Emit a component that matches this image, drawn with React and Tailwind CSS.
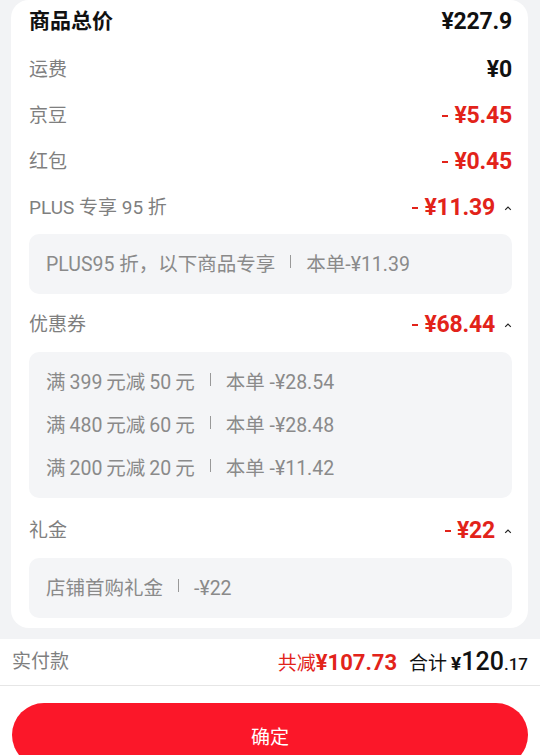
import React from "react";

const FONT = { fontFamily: '"Roboto", "Noto Sans CJK SC", sans-serif' };

// small up chevron next to collapsible amounts
const ChevronUp = () => (
  <svg width="8" height="6" viewBox="0 0 8 6" className="ml-[9px]">
    <path d="M1.2 4.8 L4 2 L6.8 4.8" fill="none" stroke="#222" strokeWidth="1.2" />
  </svg>
);

const Amount = ({ value, red }) => {
  if (!red) {
    return (
      <span className="text-[23px] font-bold tracking-[-0.2px] text-[#111]">
        {value}
      </span>
    );
  }
  return (
    <span className="flex items-center text-[23px] font-bold tracking-[-0.2px] text-[#e2231a]">
      <span className="mr-[6px] inline-block h-[2.5px] w-[6px] bg-[#e2231a]" />
      {value}
    </span>
  );
};

const Row = ({ label, amount, red, open }) => (
  <div className="flex h-[46px] items-center justify-between">
    <span className="whitespace-pre text-[19px] text-[#7f7f7f]">{label}</span>
    <div className="flex items-center">
      <Amount value={amount} red={red} />
      {open && <ChevronUp />}
    </div>
  </div>
);

const Sep = () => (
  <span className="mx-[15px] inline-block h-[13px] w-px translate-y-[-3px] bg-[#999]" />
);

const DetailBox = ({ lines, className = "" }) => (
  <div className={`rounded-[10px] bg-[#f4f5f7] px-[17px] pt-[9px] pb-[8px] ${className}`}>
    {lines.map((l, i) => (
      <div
        key={i}
        className="flex h-[43px] items-center text-[19.5px] text-[#8a8a8a]"
      >
        <span className="whitespace-pre">{l[0]}</span>
        <Sep />
        <span className="whitespace-pre">{l[1]}</span>
      </div>
    ))}
  </div>
);

export default function App() {
  return (
    <div className="h-[755px] w-[540px] overflow-hidden bg-[#f2f3f5]" style={FONT}>
      <div className="mx-[11px] w-[517px] rounded-[18px] bg-white pl-[18px] pr-[16px] pb-[10px]">
        <div className="flex h-[44px] items-center justify-between">
          <span className="text-[21px] font-bold text-[#111]">商品总价</span>
          <Amount value="¥227.9" />
        </div>
        <div className="mt-[3px]">
          <Row label="运费" amount="¥0" />
          <Row label="京豆" amount="¥5.45" red />
          <Row label="红包" amount="¥0.45" red />
          <Row label="PLUS 专享 95 折" amount="¥11.39" red open />
        </div>
        <DetailBox
          className="mt-[3px]"
          lines={[["PLUS95 折，以下商品专享", "本单-¥11.39"]]}
        />
        <div className="mt-[8px]">
          <Row label="优惠券" amount="¥68.44" red open />
        </div>
        <DetailBox
          className="mt-[4px]"
          lines={[
            ["满\u2009399\u2009元减\u200950\u2009元", "本单 -¥28.54"],
            ["满\u2009480\u2009元减\u200960\u2009元", "本单 -¥28.48"],
            ["满\u2009200\u2009元减\u200920\u2009元", "本单 -¥11.42"],
          ]}
        />
        <div className="mt-[10px]">
          <Row label="礼金" amount="¥22" red open />
        </div>
        <DetailBox className="mt-[4px]" lines={[["店铺首购礼金", "-¥22"]]} />
      </div>

      <div className="mt-[11px] flex h-[47px] items-center justify-between border-b border-[#e6e6e6] bg-white px-[12px]">
        <span className="text-[19px] text-[#7f7f7f]">实付款</span>
        <div className="flex items-baseline">
          <span className="text-[19px] text-[#e2231a]">共减</span>
          <span className="text-[22px] font-bold text-[#e2231a]">¥107.73</span>
          <span className="ml-[12px] text-[19px] text-[#111]">合计</span>
          <span className="ml-[4px] text-[19px] font-bold text-[#111]">¥</span>
          <span className="text-[25px] font-medium text-[#111]">120</span>
          <span className="text-[17px] font-medium text-[#111]">.17</span>
        </div>
      </div>

      <div className="bg-white px-[12px] pt-[17px] pb-[20px]">
        <button className="flex h-[64px] w-full items-start justify-center rounded-full bg-[#fb1729] pt-[21px] text-[19px] text-white">
          确定
        </button>
      </div>
    </div>
  );
}
